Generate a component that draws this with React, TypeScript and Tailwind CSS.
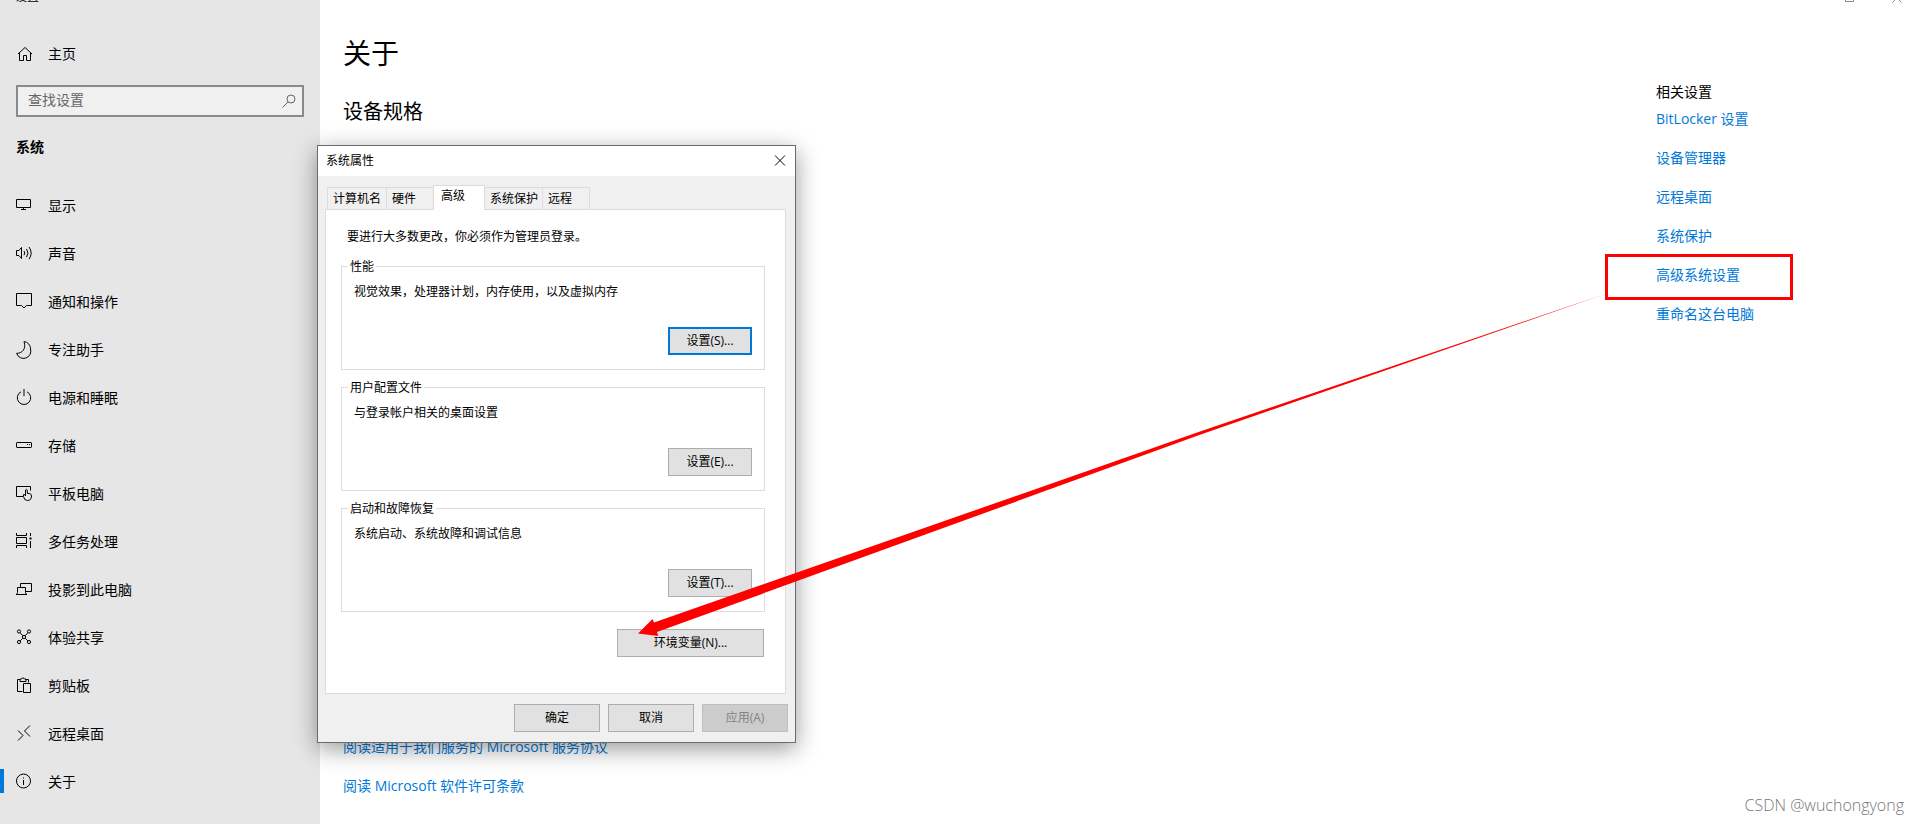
import React from "react";

const UI_FONT = "font-['Open_Sans','Noto_Sans_CJK_SC',sans-serif]";

function Icon({ children }: { children: React.ReactNode }) {
  return (
    <svg
      className="size-4 shrink-0 overflow-visible"
      viewBox="0 0 16 16"
      fill="none"
      stroke="currentColor"
      strokeWidth="1"
      aria-hidden="true"
    >
      {children}
    </svg>
  );
}

const navItems: { label: string; icon: React.ReactNode; active?: boolean }[] = [
  {
    label: "显示",
    icon: <path d="M.5 2.5h14v8H.5zM7.5 10.5v2M5 12.5h5" />,
  },
  {
    label: "声音",
    icon: (
      <path d="M.5 5.5H3L5.5 2.5v11L3 10.5H.5zM8 6q1.6 2 0 4.200M10.500 4q3 4 0 8.200M13 2q4.400 6 0 12.200" />
    ),
  },
  {
    label: "通知和操作",
    icon: <path d="M.5.5h15v12H10.500L8 15 5.500 12.500H.5z" />,
  },
  {
    label: "专注助手",
    icon: <path d="M8 .6C12 1 14.600 4.300 14.500 8A6.800 6.800 0 0 1 .6 12.300C6 12.500 10.500 8 8 .6z" />,
  },
  {
    label: "电源和睡眠",
    icon: <path d="M5 2.800a6.700 6.700 0 1 0 6 0M8 0v7" />,
  },
  {
    label: "存储",
    icon: (
      <>
        <rect x=".5" y="5.500" width="15" height="5" rx=".6" />
        <path d="M11 7.500h1M13 7.500h1" />
      </>
    ),
  },
  {
    label: "平板电脑",
    icon: (
      <path d="M7 11.500H.5v-10h14v4M9.500 11V5q.9-1.400 1.800 0v3.500h2q2.200.3 2.200 2.500-.1 4.500-4 4.500-3.500 0-4-4V9.500q1.200-.8 2 1.500" />
    ),
  },
  {
    label: "多任务处理",
    icon: (
      <>
        <path d="M.5 0v2.500h10V0M.5 4.500h10v6H.5zM.5 15v-2.500h10V15M14.500 0v3M14.500 8v7" />
        <rect x="13.500" y="4.500" width="2" height="2" fill="currentColor" stroke="none" />
      </>
    ),
  },
  {
    label: "投影到此电脑",
    icon: <path d="M4.500 6.500V2.500h11v8H9.500M1.500 11.500V6.500h8v5M0 13.500h11M1.500 11.500.5 13.500M9.500 11.500l1 2" />,
  },
  {
    label: "体验共享",
    icon: (
      <>
        <circle cx="3" cy="2.500" r="1.600" />
        <circle cx="13" cy="2.500" r="1.600" />
        <circle cx="3" cy="13" r="1.600" />
        <circle cx="13" cy="13" r="1.600" />
        <circle cx="8" cy="8" r="1.600" />
        <path d="M4.200 3.800 6.800 6.800M11.800 3.800 9.200 6.800M4.200 11.800 6.800 9.200M11.800 11.800 9.200 9.200" />
      </>
    ),
  },
  {
    label: "剪贴板",
    icon: (
      <path d="M6.500 14.500h-5v-12H4M9.500 2.500h3v3M4 4.500v-2.500h1.500a1.600 1.600 0 0 1 3 0H10v2.500zM7.500 6.500h7v9h-7z" />
    ),
  },
  {
    label: "远程桌面",
    icon: <path d="M2 5.500 7 10.500 2 15.500M14 .5 8.500 6l5.500 5.500" />,
  },
  {
    label: "关于",
    active: true,
    icon: (
      <>
        <circle cx="7.500" cy="8" r="7" />
        <path d="M7.500 7v5M7.500 4.500v1" />
      </>
    ),
  },
];

const relatedLinks = [
  "BitLocker 设置",
  "设备管理器",
  "远程桌面",
  "系统保护",
  "高级系统设置",
  "重命名这台电脑",
];

const groups = [
  { title: "性能", text: "视觉效果，处理器计划，内存使用，以及虚拟内存", button: "设置(S)...", focused: true },
  { title: "用户配置文件", text: "与登录帐户相关的桌面设置", button: "设置(E)..." },
  { title: "启动和故障恢复", text: "系统启动、系统故障和调试信息", button: "设置(T)..." },
];

const tabs = [
  { label: "计算机名", width: "w-[60px]" },
  { label: "硬件", width: "w-[48px]" },
  { label: "高级", width: "w-[52px]", active: true },
  { label: "系统保护", width: "w-[59px]" },
  { label: "远程", width: "w-[48px]" },
];

function Sidebar() {
  return (
    <aside className="w-80 shrink-0 bg-[#e6e6e6]">
      <div className="-mt-[11px] h-4 px-[15px] text-xs leading-4">设置</div>
      <a href="#home" className="mt-[37px] flex h-6 items-center gap-[15px] px-[17px]">
        <Icon>
          <path d="M1 8 8 1.500 15 8M2.500 7v7.500h4V9.500h3v5h4V7" />
        </Icon>
        主页
      </a>
      <div className="mx-4 mt-[19px] flex h-8 items-center border-2 border-[#8a8a8a] bg-[#f0f0f0] pr-[5px] pl-[10px] text-[#666]">
        <input
          type="text"
          aria-label="查找设置"
          placeholder="查找设置"
          className="h-7 min-w-0 flex-1 bg-transparent pb-1 outline-none placeholder:text-[#666]"
        />
        <Icon>
          <circle cx="10" cy="6" r="4" />
          <path d="M7 9 1.500 14.500" />
        </Icon>
      </div>
      <h2 className="mx-4 mt-5 h-5 leading-5 font-bold">系统</h2>
      <nav className="mt-6">
        {navItems.map((item) => (
          <a
            key={item.label}
            href="#nav"
            className={
              item.active
                ? "relative flex h-12 items-center gap-4 px-4 before:absolute before:top-3 before:left-0 before:h-6 before:w-1 before:bg-[#0078d7]"
                : "flex h-12 items-center gap-4 px-4"
            }
          >
            <Icon>{item.icon}</Icon>
            <span className="pt-0.5">{item.label}</span>
          </a>
        ))}
      </nav>
    </aside>
  );
}

function Dialog() {
  return (
    <section
      role="dialog"
      aria-label="系统属性"
      className="absolute top-[145px] left-[317px] w-[479px] border border-[#6b6b6b] bg-[#f0f0f0] text-xs shadow-[0_6px_22px_rgba(0,0,0,0.4)]"
    >
      <header className="flex h-[30px] items-center justify-between bg-white pr-2 pl-2">
        <span>系统属性</span>
        <button type="button" aria-label="关闭" className="p-px">
          <svg className="size-3" viewBox="0 0 12 12" stroke="currentColor" aria-hidden="true">
            <path d="M1 .5l10 10M11 .5l-10 10" />
          </svg>
        </button>
      </header>

      <div className="px-[7px] pt-[9px] pb-[10px]">
        <div role="tablist" className="relative z-10 -mb-px flex items-end pl-0.5">
          {tabs.map((tab) => (
            <button
              key={tab.label}
              type="button"
              role="tab"
              aria-selected={!!tab.active}
              className={`${tab.width} ${
                tab.active
                  ? "relative z-10 -mr-px h-[25px] border border-b-0 border-[#dcdcdc] bg-white pb-1 pl-[7px] text-left"
                  : "-mr-px h-[23px] border border-[#dcdcdc] pl-[5px] text-left"
              }`}
            >
              {tab.label}
            </button>
          ))}
        </div>

        <div role="tabpanel" className="mr-0.5 border border-[#dcdcdc] bg-white pr-5 pb-9 pl-[15px]">
          <p className="mt-[19px] mb-[13px] ml-1.5 leading-4">要进行大多数更改，你必须作为管理员登录。</p>
          <div className="flex flex-col gap-[9px]">
            {groups.map((group) => (
              <fieldset key={group.title} className="h-28 border border-[#dcdcdc] pr-3 pl-1.5">
                <legend className="px-0.5 leading-[17px]">{group.title}</legend>
                <p className="mt-[9px] ml-1.5 leading-4">{group.text}</p>
                <div className="mt-[27px] flex justify-end">
                  <button
                    type="button"
                    className={
                      group.focused
                        ? "h-7 w-[84px] border-2 border-[#0078d7] bg-[#e1e1e1]"
                        : "h-7 w-[84px] border border-[#adadad] bg-[#e1e1e1]"
                    }
                  >
                    {group.button}
                  </button>
                </div>
              </fieldset>
            ))}
          </div>
          <div className="mt-[17px] flex justify-end pr-px">
            <button type="button" className="h-7 w-[147px] border border-[#adadad] bg-[#e1e1e1]">
              环境变量(N)...
            </button>
          </div>
        </div>

        <div className="mt-[10px] flex justify-end gap-2">
          <button type="button" className="h-7 w-[86px] border border-[#adadad] bg-[#e1e1e1]">
            确定
          </button>
          <button type="button" className="h-7 w-[86px] border border-[#adadad] bg-[#e1e1e1]">
            取消
          </button>
          <button
            type="button"
            disabled
            className="h-7 w-[86px] border border-[#bfbfbf] bg-[#cccccc] text-[#838383]"
          >
            应用(A)
          </button>
        </div>
      </div>
    </section>
  );
}

export default function App() {
  return (
    <div className={`relative flex min-h-screen overflow-hidden bg-white text-sm text-black ${UI_FONT}`}>
      <Sidebar />

      <main className="flex flex-1 justify-between pl-[23px]">
        <div className="flex flex-col">
          <h1 className="mt-[33px] text-[28px] leading-10">关于</h1>
          <h2 className="mt-[25px] text-xl leading-7">设备规格</h2>
          <div className="mt-auto mb-7 flex flex-col gap-[19px] leading-5 text-[#0078d7]">
            <a href="#services">阅读适用于我们服务的 Microsoft 服务协议</a>
            <a href="#license">阅读 Microsoft 软件许可条款</a>
          </div>
        </div>

        <div className="flex w-[315px] flex-col">
          <div className="flex h-[3px] items-end justify-end gap-[38px] overflow-hidden pr-[18px] text-[#888]">
            <svg className="size-[9px] shrink-0" viewBox="0 0 9 9" fill="none" stroke="currentColor" aria-hidden="true">
              <path d="M.5.5h8v7h-8z" />
            </svg>
            <svg className="size-[10px] shrink-0" viewBox="0 0 10 10" stroke="currentColor" aria-hidden="true">
              <path d="M0 0l9.500 9.500M10 0 .5 9.500" />
            </svg>
          </div>
          <h2 className="mt-[79px] pl-[51px] leading-5">相关设置</h2>
          <ul className="mt-[7px] flex flex-col gap-[19px] leading-5 text-[#0078d7]">
            {relatedLinks.map((label) => (
              <li key={label} className="relative pl-[51px]">
                <a href="#related">{label}</a>
                {label === "高级系统设置" && (
                  <span className="pointer-events-none absolute -top-[11px] left-0 h-[46px] w-[188px] border-3 border-[#ff0000]" />
                )}
              </li>
            ))}
          </ul>
          <div className="mt-auto mb-[7px] pr-4 text-right text-base leading-6 font-light text-[#777]">
            CSDN @wuchongyong
          </div>
        </div>
      </main>

      <Dialog />

      <svg
        className="pointer-events-none absolute top-0 left-0 h-[824px] w-[1920px]"
        viewBox="0 0 1920 824"
        fill="#ff0000"
        aria-hidden="true"
      >
        <path d="M638 633.500 652.500 619 654 622.600 1200 431.500 1605 294 1200 434.800 657 632 658.200 636z" />
      </svg>
    </div>
  );
}
